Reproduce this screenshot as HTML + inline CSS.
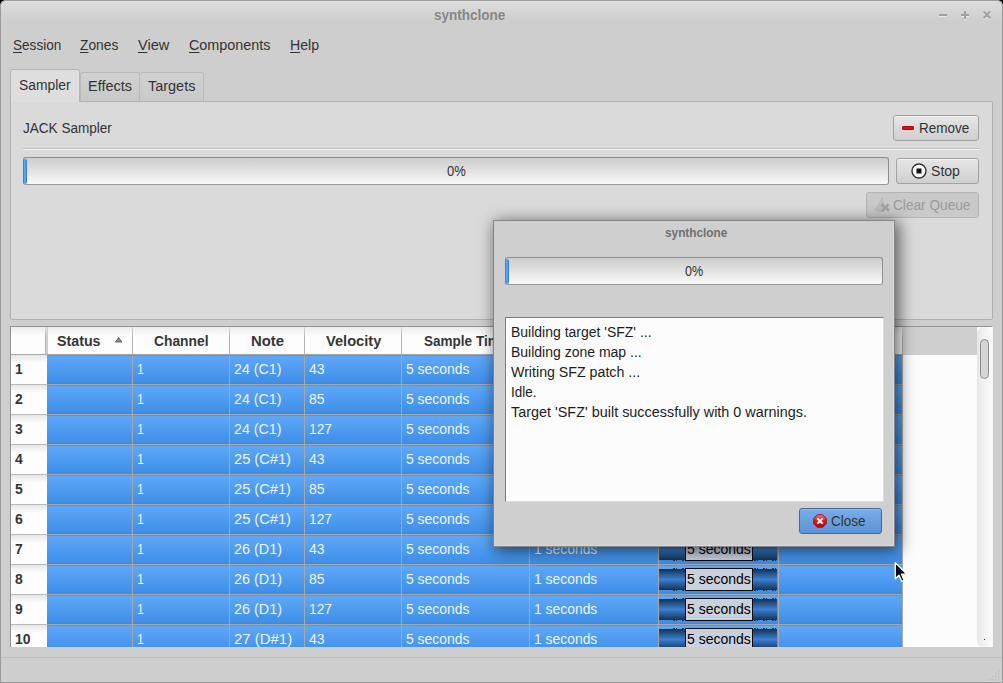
<!DOCTYPE html><html><head><meta charset="utf-8"><title>synthclone</title><style>html,body{margin:0;padding:0;background:#000;}
body{width:1003px;height:683px;overflow:hidden;font-family:"Liberation Sans",sans-serif;font-size:15.5px;color:#333;}
#win{position:absolute;left:0;top:0;width:1003px;height:683px;box-sizing:border-box;border-radius:6px 6px 0 0;background:#cecece;overflow:hidden;}
#frame{position:absolute;left:0;top:0;width:1003px;height:683px;box-sizing:border-box;border:1px solid #9a9a9a;border-radius:6px 6px 0 0;pointer-events:none;}
.abs{position:absolute;}
#titlebar{position:absolute;left:1px;top:1px;width:1001px;height:21px;background:linear-gradient(#e4e4e4,#dcdcdc 1px,#cecece 20px);}
.t{position:absolute;white-space:nowrap;line-height:18px;transform-origin:0 50%;}

.b{font-weight:bold;color:#363636;}
.c{color:#eef4ff;}
.t.title{font-weight:bold;color:#878787;}
.t.dt{color:#707070;}
.menu u{text-decoration:underline;text-underline-offset:2px;}
#pane{position:absolute;left:10px;top:101px;width:981px;height:217px;border:1px solid #b0b0b0;border-radius:0 2px 2px 2px;background:#dadada;}
.tab{position:absolute;top:72px;height:29px;border:1px solid #b9b9b9;border-bottom:none;border-radius:3px 3px 0 0;background:linear-gradient(#d1d1d1,#c9c9c9);box-sizing:border-box;}
.tab.sel{top:69px;height:33px;background:#dedede;border-color:#b4b4b4;}
.btn{position:absolute;box-sizing:border-box;border:1px solid #a2a2a2;border-radius:3px;background:linear-gradient(#e6e6e6,#cfcfcf);box-shadow:inset 0 1px 0 #f2f2f2;}
.btn.dis{background:#c9c9c9;border-color:#b4b4b4;box-shadow:none;}
.btn.def{background:linear-gradient(#7aade8,#5b93d8);border-color:#46699a;box-shadow:inset 0 1px 0 #8ab8ee;}
.prog{position:absolute;box-sizing:border-box;border:1px solid #8e8e8e;border-bottom-color:#999;border-radius:3px;background:linear-gradient(#cdcdcd,#e2e2e2 50%,#f9f9f9);}
.prog i{position:absolute;left:-1px;top:1px;width:4px;height:25px;background:linear-gradient(90deg,#2b72cc,#66aeff 45%,#4a94ee 70%,#2b72cc);border-radius:2px;}
#table{position:absolute;left:10px;top:326px;width:981px;height:320px;border:1px solid #939393;border-right-color:#f6f6f6;border-bottom:none;background:#fcfcfc;overflow:hidden;}
#thead{position:absolute;left:0;top:0;width:966px;height:28px;background:#cfcfcf;}
#thl{position:absolute;left:0;top:27px;width:892px;height:1px;background:#a8a8a8;}
.hc{position:absolute;top:0;height:27px;box-sizing:border-box;background:linear-gradient(#ebebeb,#fdfdfd 9px);}
.hc:after{content:'';position:absolute;right:0;top:0;width:1px;height:27px;background:linear-gradient(#d8d8d8,#b4b4b4 10px);}
.row{position:absolute;left:36px;width:856px;height:29px;background:linear-gradient(#3b84dc,#5ea8f8 1px,#3e8ee8 28px,#3a84de);border-bottom:1px solid #a8a8a8;}
.rh{position:absolute;left:0;width:36px;height:29px;background:linear-gradient(#e6e6e6,#fdfdfd 8px);border-bottom:1px solid #b8b8b8;}
.vl{position:absolute;top:28px;width:1px;height:300px;background:#a8a8a8;}
.wave{position:absolute;left:648px;width:118px;height:21px;margin-top:1px;background:linear-gradient(#17324f,#3a80d4 50%,#17324f);}
.wave:before,.wave:after{content:'';position:absolute;left:14px;right:0;height:1px;background:repeating-linear-gradient(90deg,#1d3a5c 0 2px,transparent 2px 3px,#1d3a5c 3px 4px,transparent 4px 9px);}
.wave:before{top:-1px}.wave:after{bottom:-1px}
.wl{position:absolute;left:674px;width:68px;height:23px;box-sizing:border-box;border:1px solid #0a0a0a;background:#c9d1dd;}
#sbar{position:absolute;left:966px;top:0;width:15px;height:320px;background:linear-gradient(90deg,#e6e6e6,#f3f3f3 50%,#fafafa);border-radius:7px 7px 6px 6px;}
#sbar i{position:absolute;left:3px;top:12px;width:9px;height:40px;border:1px solid #8c8c8c;border-radius:5px;background:#d6d6d6;box-sizing:border-box;}
#dlg{position:absolute;left:493px;top:220px;width:400px;height:325px;border:1px solid #858585;background:#cfcfcf;box-shadow:inset -1px -1px 0 #d9d9d9,3px 3px 15px 1px rgba(0,0,0,.6);}
#log{position:absolute;left:11px;top:96px;width:377px;height:183px;border:1px solid #7c7c7c;border-right-color:#dcdcdc;border-bottom-color:#dcdcdc;background:#fcfcfc;box-sizing:content-box;}
</style></head><body>
<div id="win">
<div id="titlebar"></div>
<div class="t title b" style="left:434.00px;top:5.5px;transform:scaleX(0.901);font-size:15px;">synthclone</div>
<svg class="abs" style="left:936px;top:8px" width="60" height="16" viewBox="0 0 60 16"><g stroke="#ececec" stroke-width="2" fill="none"><path d="M3 8h8M25 8h8M29 4v8M47.6 4.4l6.8 6.8M54.4 4.4l-6.8 6.8"/></g><g stroke="#a0a0a0" stroke-width="2" fill="none"><path d="M3 7h8M25 7h8M29 3v8M47.6 3.4l6.8 6.8M54.4 3.4l-6.8 6.8"/></g></svg>
<div class="t menu" style="left:13.30px;top:36px;transform:scaleX(0.876);"><u>S</u>ession</div>
<div class="t menu" style="left:80.00px;top:36px;transform:scaleX(0.890);"><u>Z</u>ones</div>
<div class="t menu" style="left:138.00px;top:36px;transform:scaleX(0.941);"><u>V</u>iew</div>
<div class="t menu" style="left:189.00px;top:36px;transform:scaleX(0.926);"><u>C</u>omponents</div>
<div class="t menu" style="left:290.00px;top:36px;transform:scaleX(0.910);"><u>H</u>elp</div>
<div id="pane"></div>
<div class="tab" style="left:80px;width:60px"></div><div class="tab" style="left:139px;width:65px"></div>
<div class="tab sel" style="left:10px;width:70px"></div>
<div class="t" style="left:19.40px;top:76px;transform:scaleX(0.894);">Sampler</div>
<div class="t" style="left:87.70px;top:77px;transform:scaleX(0.932);">Effects</div>
<div class="t" style="left:148.30px;top:77px;transform:scaleX(0.932);">Targets</div>
<div class="t" style="left:22.90px;top:119px;transform:scaleX(0.874);">JACK Sampler</div>
<div class="btn" style="left:893px;top:115px;width:86px;height:26px"></div>
<div class="abs" style="left:902px;top:126px;width:12px;height:4px;border-radius:2px;background:#d8141c;box-shadow:inset 0 0 0 1px #b00008"></div>
<div class="t" style="left:919.30px;top:119px;transform:scaleX(0.871);">Remove</div>
<div class="abs" style="left:23px;top:148px;width:957px;height:1px;background:#c0c0c0"></div><div class="abs" style="left:23px;top:149px;width:957px;height:1px;background:#f2f2f2"></div>
<div class="prog" style="left:23px;top:157px;width:866px;height:28px"><i></i></div>
<div class="t" style="left:446.70px;top:162px;transform:scaleX(0.840);">0%</div>
<div class="btn" style="left:896px;top:158px;width:83px;height:26px"></div>
<svg class="abs" style="left:910px;top:162px" width="18" height="18" viewBox="0 0 18 18"><circle cx="9" cy="9" r="7" fill="#fdfdfd" stroke="#333" stroke-width="1.4"/><rect x="6.5" y="6.5" width="5" height="5" fill="#111"/></svg>
<div class="t" style="left:930.70px;top:162px;transform:scaleX(0.907);">Stop</div>
<div class="btn dis" style="left:866px;top:192px;width:113px;height:26px"></div>
<svg class="abs" style="left:873px;top:196px" width="18" height="18" viewBox="0 0 18 18"><path d="M1 14.5L9.6 1l1.8 8.5-3 7z" fill="#bababa"/><path d="M8.5 8.5l7.5 6M15.5 8.2l-6.5 7.3" stroke="#a0a0a0" stroke-width="2.6" fill="none"/></svg>
<div class="t" style="left:892.60px;top:196px;transform:scaleX(0.881);color:#9a9a9a;">Clear Queue</div>
<div id="table">
<div id="thead"></div>
<div class="hc" style="left:37px;width:85px"></div>
<div class="t b" style="left:46.40px;top:5px;transform:scaleX(0.918);">Status</div>
<div class="hc" style="left:122px;width:97px"></div>
<div class="t b" style="left:143.00px;top:5px;transform:scaleX(0.892);">Channel</div>
<div class="hc" style="left:219px;width:75px"></div>
<div class="t b" style="left:239.50px;top:5px;transform:scaleX(0.959);">Note</div>
<div class="hc" style="left:294px;width:97px"></div>
<div class="t b" style="left:314.60px;top:5px;transform:scaleX(0.945);">Velocity</div>
<div class="hc" style="left:391px;width:128px"></div>
<div class="t b" style="left:412.70px;top:5px;transform:scaleX(0.873);">Sample Time</div>
<div class="hc" style="left:519px;width:129px"></div>
<div class="t b" style="left:538.00px;top:5px;transform:scaleX(0.901);">Release Time</div>
<div class="hc" style="left:0px;width:35px"></div><div class="abs" style="left:35px;top:0;width:1px;height:27px;background:linear-gradient(#e4e4e4,#cfcfcf 10px)"></div>
<div class="hc" style="left:648px;width:120px"></div><div class="hc" style="left:768px;width:124px"></div>
<div class="t b" style="left:674.00px;top:5px;transform:scaleX(0.901);">Waveform</div>
<svg class="abs" style="left:103px;top:9px" width="10" height="8" viewBox="0 0 10 8"><path d="M1.5 6h6.4L4.7 1.5z" fill="#8c8c8c" stroke="#606060" stroke-width=".9" stroke-linejoin="round"/></svg>
<div class="row" style="top:28px"></div>
<div class="rh" style="top:28px"></div>
<div class="t b" style="left:4.30px;top:33px;transform:scaleX(0.900);">1</div>
<div class="t c" style="left:126.30px;top:33px;transform:scaleX(0.800);">1</div>
<div class="t c" style="left:222.90px;top:33px;transform:scaleX(0.918);">24 (C1)</div>
<div class="t c" style="left:298.00px;top:33px;transform:scaleX(0.904);">43</div>
<div class="t c" style="left:394.80px;top:33px;transform:scaleX(0.899);">5 seconds</div>
<div class="t c" style="left:523.00px;top:33px;transform:scaleX(0.896);">1 seconds</div>
<div class="wave" style="top:31px"></div><div class="wl" style="top:31px"></div>
<div class="t" style="left:676.00px;top:33px;transform:scaleX(0.901);color:#000;">5 seconds</div>
<div class="row" style="top:58px"></div>
<div class="rh" style="top:58px"></div>
<div class="t b" style="left:4.30px;top:63px;transform:scaleX(0.900);">2</div>
<div class="t c" style="left:126.30px;top:63px;transform:scaleX(0.800);">1</div>
<div class="t c" style="left:222.90px;top:63px;transform:scaleX(0.918);">24 (C1)</div>
<div class="t c" style="left:297.80px;top:63px;transform:scaleX(0.904);">85</div>
<div class="t c" style="left:394.80px;top:63px;transform:scaleX(0.899);">5 seconds</div>
<div class="t c" style="left:523.00px;top:63px;transform:scaleX(0.896);">1 seconds</div>
<div class="wave" style="top:61px"></div><div class="wl" style="top:61px"></div>
<div class="t" style="left:676.00px;top:63px;transform:scaleX(0.901);color:#000;">5 seconds</div>
<div class="row" style="top:88px"></div>
<div class="rh" style="top:88px"></div>
<div class="t b" style="left:4.30px;top:93px;transform:scaleX(0.900);">3</div>
<div class="t c" style="left:126.30px;top:93px;transform:scaleX(0.800);">1</div>
<div class="t c" style="left:222.90px;top:93px;transform:scaleX(0.918);">24 (C1)</div>
<div class="t c" style="left:298.20px;top:93px;transform:scaleX(0.889);">127</div>
<div class="t c" style="left:394.80px;top:93px;transform:scaleX(0.899);">5 seconds</div>
<div class="t c" style="left:523.00px;top:93px;transform:scaleX(0.896);">1 seconds</div>
<div class="wave" style="top:91px"></div><div class="wl" style="top:91px"></div>
<div class="t" style="left:676.00px;top:93px;transform:scaleX(0.901);color:#000;">5 seconds</div>
<div class="row" style="top:118px"></div>
<div class="rh" style="top:118px"></div>
<div class="t b" style="left:4.30px;top:123px;transform:scaleX(0.900);">4</div>
<div class="t c" style="left:126.30px;top:123px;transform:scaleX(0.800);">1</div>
<div class="t c" style="left:222.90px;top:123px;transform:scaleX(0.944);">25 (C#1)</div>
<div class="t c" style="left:298.00px;top:123px;transform:scaleX(0.904);">43</div>
<div class="t c" style="left:394.80px;top:123px;transform:scaleX(0.899);">5 seconds</div>
<div class="t c" style="left:523.00px;top:123px;transform:scaleX(0.896);">1 seconds</div>
<div class="wave" style="top:121px"></div><div class="wl" style="top:121px"></div>
<div class="t" style="left:676.00px;top:123px;transform:scaleX(0.901);color:#000;">5 seconds</div>
<div class="row" style="top:148px"></div>
<div class="rh" style="top:148px"></div>
<div class="t b" style="left:4.30px;top:153px;transform:scaleX(0.900);">5</div>
<div class="t c" style="left:126.30px;top:153px;transform:scaleX(0.800);">1</div>
<div class="t c" style="left:222.90px;top:153px;transform:scaleX(0.944);">25 (C#1)</div>
<div class="t c" style="left:297.80px;top:153px;transform:scaleX(0.904);">85</div>
<div class="t c" style="left:394.80px;top:153px;transform:scaleX(0.899);">5 seconds</div>
<div class="t c" style="left:523.00px;top:153px;transform:scaleX(0.896);">1 seconds</div>
<div class="wave" style="top:151px"></div><div class="wl" style="top:151px"></div>
<div class="t" style="left:676.00px;top:153px;transform:scaleX(0.901);color:#000;">5 seconds</div>
<div class="row" style="top:178px"></div>
<div class="rh" style="top:178px"></div>
<div class="t b" style="left:4.30px;top:183px;transform:scaleX(0.900);">6</div>
<div class="t c" style="left:126.30px;top:183px;transform:scaleX(0.800);">1</div>
<div class="t c" style="left:222.90px;top:183px;transform:scaleX(0.944);">25 (C#1)</div>
<div class="t c" style="left:298.20px;top:183px;transform:scaleX(0.889);">127</div>
<div class="t c" style="left:394.80px;top:183px;transform:scaleX(0.899);">5 seconds</div>
<div class="t c" style="left:523.00px;top:183px;transform:scaleX(0.896);">1 seconds</div>
<div class="wave" style="top:181px"></div><div class="wl" style="top:181px"></div>
<div class="t" style="left:676.00px;top:183px;transform:scaleX(0.901);color:#000;">5 seconds</div>
<div class="row" style="top:208px"></div>
<div class="rh" style="top:208px"></div>
<div class="t b" style="left:4.30px;top:213px;transform:scaleX(0.900);">7</div>
<div class="t c" style="left:126.30px;top:213px;transform:scaleX(0.800);">1</div>
<div class="t c" style="left:223.20px;top:213px;transform:scaleX(0.928);">26 (D1)</div>
<div class="t c" style="left:298.00px;top:213px;transform:scaleX(0.904);">43</div>
<div class="t c" style="left:394.80px;top:213px;transform:scaleX(0.899);">5 seconds</div>
<div class="t c" style="left:523.00px;top:213px;transform:scaleX(0.896);">1 seconds</div>
<div class="wave" style="top:211px"></div><div class="wl" style="top:211px"></div>
<div class="t" style="left:676.00px;top:213px;transform:scaleX(0.901);color:#000;">5 seconds</div>
<div class="row" style="top:238px"></div>
<div class="rh" style="top:238px"></div>
<div class="t b" style="left:4.30px;top:243px;transform:scaleX(0.900);">8</div>
<div class="t c" style="left:126.30px;top:243px;transform:scaleX(0.800);">1</div>
<div class="t c" style="left:223.20px;top:243px;transform:scaleX(0.928);">26 (D1)</div>
<div class="t c" style="left:297.80px;top:243px;transform:scaleX(0.904);">85</div>
<div class="t c" style="left:394.80px;top:243px;transform:scaleX(0.899);">5 seconds</div>
<div class="t c" style="left:523.00px;top:243px;transform:scaleX(0.896);">1 seconds</div>
<div class="wave" style="top:241px"></div><div class="wl" style="top:241px"></div>
<div class="t" style="left:676.00px;top:243px;transform:scaleX(0.901);color:#000;">5 seconds</div>
<div class="row" style="top:268px"></div>
<div class="rh" style="top:268px"></div>
<div class="t b" style="left:4.30px;top:273px;transform:scaleX(0.900);">9</div>
<div class="t c" style="left:126.30px;top:273px;transform:scaleX(0.800);">1</div>
<div class="t c" style="left:223.20px;top:273px;transform:scaleX(0.928);">26 (D1)</div>
<div class="t c" style="left:298.20px;top:273px;transform:scaleX(0.889);">127</div>
<div class="t c" style="left:394.80px;top:273px;transform:scaleX(0.899);">5 seconds</div>
<div class="t c" style="left:523.00px;top:273px;transform:scaleX(0.896);">1 seconds</div>
<div class="wave" style="top:271px"></div><div class="wl" style="top:271px"></div>
<div class="t" style="left:676.00px;top:273px;transform:scaleX(0.901);color:#000;">5 seconds</div>
<div class="row" style="top:298px"></div>
<div class="rh" style="top:298px"></div>
<div class="t b" style="left:4.30px;top:303px;transform:scaleX(0.900);">10</div>
<div class="t c" style="left:126.30px;top:303px;transform:scaleX(0.800);">1</div>
<div class="t c" style="left:223.20px;top:303px;transform:scaleX(0.964);">27 (D#1)</div>
<div class="t c" style="left:298.00px;top:303px;transform:scaleX(0.904);">43</div>
<div class="t c" style="left:394.80px;top:303px;transform:scaleX(0.899);">5 seconds</div>
<div class="t c" style="left:523.00px;top:303px;transform:scaleX(0.896);">1 seconds</div>
<div class="wave" style="top:301px"></div><div class="wl" style="top:301px"></div>
<div class="t" style="left:676.00px;top:303px;transform:scaleX(0.901);color:#000;">5 seconds</div>
<div class="vl" style="left:121px"></div>
<div class="vl" style="left:218px"></div>
<div class="vl" style="left:293px"></div>
<div class="vl" style="left:390px"></div>
<div class="vl" style="left:518px"></div>
<div class="vl" style="left:647px"></div>
<div class="vl" style="left:767px"></div>
<div class="vl" style="left:891px"></div>
<div id="thl"></div>
<div id="sbar"><i></i><b style="position:absolute;left:7px;top:312px;width:1px;height:1px;background:#333"></b></div>
</div>
<div class="abs" style="left:1px;top:657px;width:1001px;height:1px;background:#bcbcbc"></div>
<svg class="abs" style="left:988px;top:668px" width="14" height="14" viewBox="0 0 14 14"><g fill="#bdbdbd"><rect x="10" y="2" width="1.4" height="1.4"/><rect x="7" y="5" width="1.4" height="1.4"/><rect x="10" y="5" width="1.4" height="1.4"/><rect x="4" y="8" width="1.4" height="1.4"/><rect x="7" y="8" width="1.4" height="1.4"/><rect x="10" y="8" width="1.4" height="1.4"/><rect x="1" y="11" width="1.4" height="1.4"/><rect x="4" y="11" width="1.4" height="1.4"/><rect x="7" y="11" width="1.4" height="1.4"/><rect x="10" y="11" width="1.4" height="1.4"/></g></svg>
<div id="dlg">
<div class="t title dt b" style="left:170.90px;top:3px;transform:scaleX(0.909);font-size:13px;">synthclone</div>
<div class="prog" style="left:11px;top:36px;width:378px;height:28px"><i></i></div>
<div class="t" style="left:190.90px;top:41px;transform:scaleX(0.809);">0%</div>
<div id="log"></div>
<div class="t" style="left:16.80px;top:102px;transform:scaleX(0.902);color:#1c1c1c;">Building target 'SFZ' ...</div>
<div class="t" style="left:16.80px;top:122px;transform:scaleX(0.903);color:#1c1c1c;">Building zone map ...</div>
<div class="t" style="left:16.80px;top:142px;transform:scaleX(0.916);color:#1c1c1c;">Writing SFZ patch ...</div>
<div class="t" style="left:16.80px;top:162px;transform:scaleX(0.868);color:#1c1c1c;">Idle.</div>
<div class="t" style="left:16.80px;top:182px;transform:scaleX(0.929);color:#1c1c1c;">Target 'SFZ' built successfully with 0 warnings.</div>
<div class="btn def" style="left:305px;top:287px;width:83px;height:26px"></div>
<svg class="abs" style="left:319px;top:293px" width="14" height="14" viewBox="0 0 16 16"><defs><linearGradient id="rg" x1="0" y1="0" x2="0" y2="1"><stop offset="0" stop-color="#f4767a"/><stop offset=".45" stop-color="#e01b24"/><stop offset="1" stop-color="#b8000c"/></linearGradient></defs><path d="M5 .8h6L15.2 5v6L11 15.2H5L.8 11V5z" fill="url(#rg)" stroke="#b00010" stroke-width="1"/><path d="M5 5l6 6M11 5l-6 6" stroke="#fff" stroke-width="2.4"/></svg>
<div class="t" style="left:337.40px;top:291px;transform:scaleX(0.868);">Close</div>
</div>
<svg class="abs" style="left:894px;top:561px" width="16" height="23" viewBox="0 0 16 23"><path d="M1.3 1.6v16.2l3.7-3.6 2.7 6.1 2.5-1.1-2.7-6h5.4z" fill="#0c0c0c" stroke="#fff" stroke-width="1.3" stroke-linejoin="round"/></svg>
<div id="frame"></div>
</div></body></html>
